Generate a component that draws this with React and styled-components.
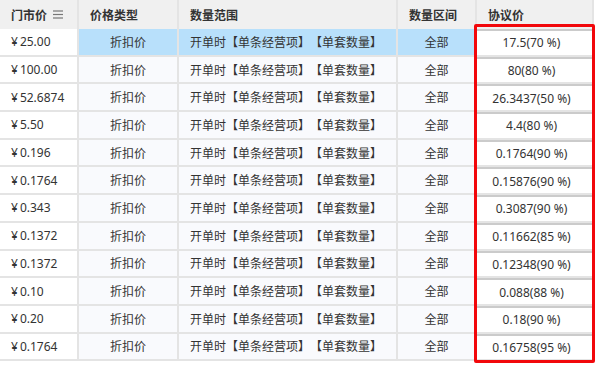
import React from "react";
import styled, { createGlobalStyle } from "styled-components";

const Global = createGlobalStyle`
  html, body { margin: 0; padding: 0; background: #fff; }
  body { font-family: "Noto Sans", "Noto Sans CJK SC", sans-serif; }
`;

const COLS = "79px 100px 219px 79px 117px";

const Wrap = styled.div`
  position: relative;
  width: 600px;
  height: 366px;
  overflow: hidden;
  background: #fff;
`;

const Table = styled.div`
  width: 594px;
  display: flex;
  flex-direction: column;
`;

const HeadRow = styled.div`
  display: grid;
  grid-template-columns: ${COLS};
  height: 29px;
  background: #f0f0f0;
`;

const HeadCell = styled.div`
  display: flex;
  align-items: center;
  gap: 6px;
  padding-left: 11px;
  border-right: 2px solid #e4e4e4;
  font-size: 12px;
  font-weight: 700;
  color: #333;
  font-family: "Noto Sans CJK SC", sans-serif;
`;

const Row = styled.div`
  display: grid;
  grid-template-columns: ${COLS};
  height: 27.7px;
  box-sizing: border-box;
`;

const Cell = styled.div`
  display: flex;
  align-items: center;
  justify-content: ${(p) => (p.$center ? "center" : "flex-start")};
  padding-left: ${(p) => (p.$center ? "0" : "11px")};
  border-right: 2px solid #e4e4e4;
  border-bottom: 2px solid #e4e4e4;
  font-size: 12px;
  color: #333;
  white-space: nowrap;
  text-spacing-trim: space-all;
  font-feature-settings: "chws" 0, "halt" 0;
  background: ${(p) => (p.$white ? "#fff" : p.$active ? "#b8e0fb" : "#f9fafd")};
`;

const PriceCell = styled.div`
  display: flex;
  border-right: 2px solid #e4e4e4;
  border-bottom: 2px solid #e4e4e4;
  background: #f9fafd;
`;

const PriceBox = styled.div`
  flex: 1;
  display: flex;
  align-items: center;
  justify-content: center;
  border-top: 2px solid #cbcbcb;
  background: #fff;
  font-size: 12px;
  color: #333;
  padding-right: 6px;
`;

const Mark = styled.div`
  position: absolute;
  left: 474px;
  top: 24px;
  width: 121px;
  height: 339px;
  box-sizing: border-box;
  border: 3px solid #f2070b;
  border-radius: 2px;
  pointer-events: none;
`;

const MenuIcon = () => (
  <svg width="10" height="9" viewBox="0 0 10 9">
    <g stroke="#777" strokeWidth="1.2">
      <line x1="0" y1="1" x2="10" y2="1" />
      <line x1="0" y1="4.5" x2="10" y2="4.5" />
      <line x1="0" y1="8" x2="10" y2="8" />
    </g>
  </svg>
);

const rows = [
  ["25.00", "17.5(70 %)"],
  ["100.00", "80(80 %)"],
  ["52.6874", "26.3437(50 %)"],
  ["5.50", "4.4(80 %)"],
  ["0.196", "0.1764(90 %)"],
  ["0.1764", "0.15876(90 %)"],
  ["0.343", "0.3087(90 %)"],
  ["0.1372", "0.11662(85 %)"],
  ["0.1372", "0.12348(90 %)"],
  ["0.10", "0.088(88 %)"],
  ["0.20", "0.18(90 %)"],
  ["0.1764", "0.16758(95 %)"],
];

const Yen = styled.span`
  margin-right: 2px;
`;

export default function App() {
  return (
    <Wrap>
      <Global />
      <Table>
        <HeadRow>
          <HeadCell>
            门市价 <MenuIcon />
          </HeadCell>
          <HeadCell>价格类型</HeadCell>
          <HeadCell>数量范围</HeadCell>
          <HeadCell>数量区间</HeadCell>
          <HeadCell>协议价</HeadCell>
        </HeadRow>
        {rows.map(([p, a], i) => (
          <Row key={i}>
            <Cell $white>
              <Yen>¥</Yen>
              {p}
            </Cell>
            <Cell $center $active={i === 0}>折扣价</Cell>
            <Cell $active={i === 0}>开单时【单条经营项】【单套数量】</Cell>
            <Cell $center $active={i === 0}>全部</Cell>
            <PriceCell>
              <PriceBox>{a}</PriceBox>
            </PriceCell>
          </Row>
        ))}
      </Table>
      <Mark />
    </Wrap>
  );
}
